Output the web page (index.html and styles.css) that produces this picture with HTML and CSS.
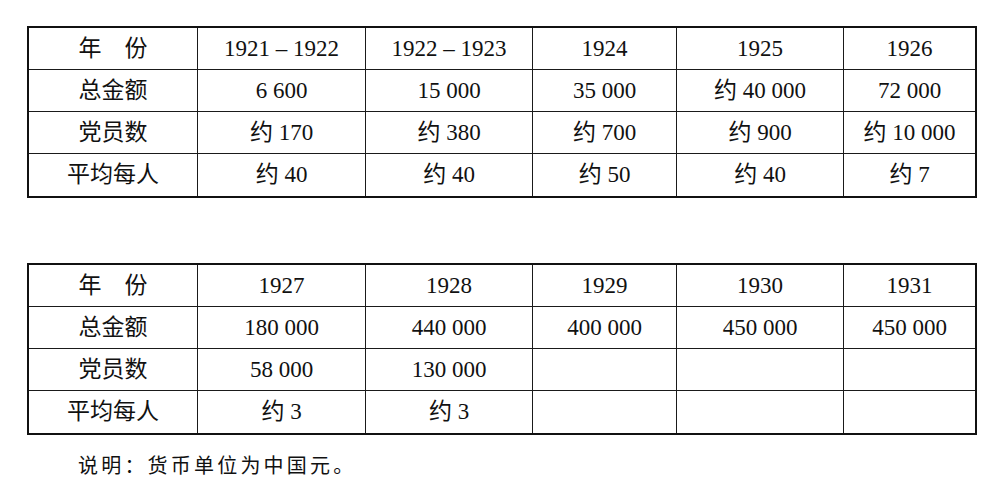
FILE: index.html
```html
<!DOCTYPE html>
<html lang="zh-CN">
<head>
<meta charset="utf-8">
<title>党费收入统计</title>
<link rel="stylesheet" href="styles.css">
</head>
<body>
<main class="page">
  <table class="data">
    <colgroup>
      <col class="c1"><col class="c2"><col class="c3"><col class="c4"><col class="c5"><col class="c6">
    </colgroup>
    <tr><td>年　份</td><td>1921 – 1922</td><td>1922 – 1923</td><td>1924</td><td>1925</td><td>1926</td></tr>
    <tr><td>总金额</td><td>6 600</td><td>15 000</td><td>35 000</td><td>约 40 000</td><td>72 000</td></tr>
    <tr><td>党员数</td><td>约 170</td><td>约 380</td><td>约 700</td><td>约 900</td><td>约 10 000</td></tr>
    <tr><td>平均每人</td><td>约 40</td><td>约 40</td><td>约 50</td><td>约 40</td><td>约 7</td></tr>
  </table>

  <table class="data second">
    <colgroup>
      <col class="c1"><col class="c2"><col class="c3"><col class="c4"><col class="c5"><col class="c6">
    </colgroup>
    <tr><td>年　份</td><td>1927</td><td>1928</td><td>1929</td><td>1930</td><td>1931</td></tr>
    <tr><td>总金额</td><td>180 000</td><td>440 000</td><td>400 000</td><td>450 000</td><td>450 000</td></tr>
    <tr><td>党员数</td><td>58 000</td><td>130 000</td><td></td><td></td><td></td></tr>
    <tr><td>平均每人</td><td>约 3</td><td>约 3</td><td></td><td></td><td></td></tr>
  </table>

  <p class="note">说明：货币单位为中国元。</p>
</main>
</body>
</html>
```

FILE: styles.css
```css
html, body {
  margin: 0;
  padding: 0;
  background: #ffffff;
}

.page {
  padding: 26px 0 0 27px;
  color: #111111;
  font-family: "Liberation Serif", "Noto Sans CJK SC", serif;
}

.data {
  width: 950px;
  border-collapse: separate;
  border-spacing: 0;
  border: 2px solid #111111;
  table-layout: fixed;
  font-size: 23px;
}

.data .c1 { width: 169px; }
.data .c2 { width: 168px; }
.data .c3 { width: 167px; }
.data .c4 { width: 144px; }
.data .c5 { width: 167px; }
.data .c6 { width: 131px; }

.data tr {
  height: 42px;
}

.data td {
  padding: 0;
  text-align: center;
  vertical-align: middle;
  line-height: 26px;
  border-right: 1px solid #1a1a1a;
  border-bottom: 1px solid #1a1a1a;
  white-space: nowrap;
}

.data td:last-child {
  border-right: none;
}

.data tr:last-child td {
  border-bottom: none;
}

.second {
  margin-top: 65px;
}

.note {
  margin: 15px 0 0 51px;
  font-family: "Noto Sans CJK SC", sans-serif;
  font-size: 20px;
  line-height: 30px;
  letter-spacing: 3.2px;
  color: #111111;
}
```
